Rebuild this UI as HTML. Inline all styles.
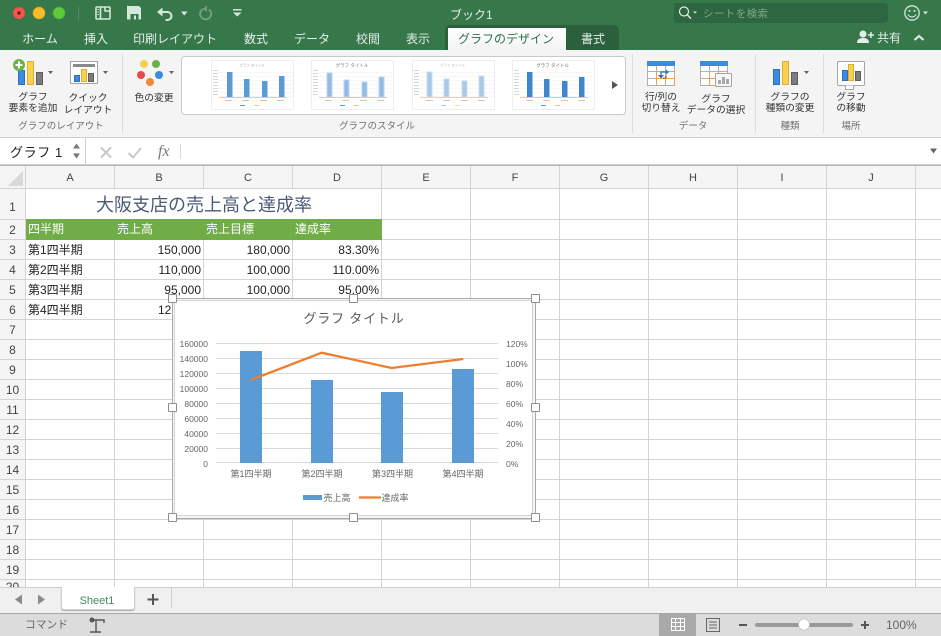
<!DOCTYPE html>
<html lang="ja"><head><meta charset="utf-8"><style>
html,body{margin:0;padding:0}
body{width:941px;height:636px;overflow:hidden;position:relative;background:#fff;font-family:"Liberation Sans","Noto Sans CJK JP",sans-serif;color:#222}
.a{position:absolute;white-space:nowrap}
.tab{position:absolute;top:31px;font-size:12px;line-height:17px;color:#e4efe7;transform:translateX(-50%);white-space:nowrap}
.rb{position:absolute;font-size:9.750px;line-height:10.500px;color:#333;text-align:center;transform:translateX(-50%);white-space:nowrap}
.gl{position:absolute;top:121px;font-size:9.500px;line-height:12px;color:#6f6f6f;transform:translateX(-50%);white-space:nowrap}
.sep{position:absolute;top:54px;height:79px;width:1px;background:#dcdcdc}
.ch{position:absolute;top:171px;font-size:11px;line-height:15px;color:#444;transform:translateX(-50%)}
.rh{position:absolute;left:0;width:25px;text-align:center;font-size:12px;line-height:14px;color:#444}
.c{position:absolute;font-size:12px;line-height:15px;color:#222;white-space:nowrap}
.r{text-align:right}
.w{color:#fff}
.h{position:absolute;width:7px;height:7px;background:#fff;border:1px solid #8f8f8f;border-radius:1px}
</style></head><body>

<!-- title bar -->
<div class="a" style="left:0;top:0;width:941px;height:50px;background:#37784b"></div>
<svg class="a" style="left:0;top:0" width="260" height="28" viewBox="0 0 260 28">
<circle cx="19" cy="13" r="6" fill="#ee5a50" stroke="#c9433b" stroke-width=".6"/><circle cx="19" cy="13" r="1.800" fill="#7d1a14"/>
<circle cx="39" cy="13" r="6" fill="#f8bb2e" stroke="#d79c1d" stroke-width=".6"/>
<circle cx="59" cy="13" r="6" fill="#5fc93e" stroke="#47a82c" stroke-width=".6"/>
<line x1="78.500" y1="6" x2="78.500" y2="21" stroke="#4e8a61"/>
<g fill="none" stroke="#d6e7db" stroke-width="1.600">
<rect x="96" y="7" width="14" height="12" rx="1"/><path d="M100.500 7v12"/><path d="M105 7v4h5"/>
</g>
<path d="M97.500 9.500h1.500M97.500 12h1.500M97.500 14.500h1.500" stroke="#d6e7db"/>
<path d="M128 6h11l2 2v11.500h-13.500a.5.5 0 0 1-.5-.5v-12.500a.5.5 0 0 1 1-.5z" fill="#d6e7db"/>
<rect x="130.500" y="14" width="8" height="5.500" fill="#37784b"/><rect x="134" y="15.500" width="2" height="4" fill="#d6e7db"/>
<path d="M160 12h7.500a4 4 0 0 1 0 8h-2" fill="none" stroke="#d6e7db" stroke-width="2"/><path d="M157 12l5.500-4.500v9z" fill="#d6e7db"/>
<path d="M181 11.500h6.500l-3.250 4z" fill="#d6e7db"/>
<path d="M203 9a5.500 5.500 0 1 0 6 .5" fill="none" stroke="#6f9f7e" stroke-width="2"/><path d="M207 5.500l-4.500 3.500 4.500 3z" fill="#6f9f7e"/>
<rect x="233" y="9" width="8.500" height="1.500" fill="#d6e7db"/><path d="M233 12.500h8.500l-4.250 4z" fill="#d6e7db"/>
</svg>
<div class="a" style="left:450px;top:7px;font-size:12px;line-height:16px;color:#e4efe7">ブック1</div>
<div class="a" style="left:674px;top:3px;width:214px;height:20px;background:#2d6640;border-radius:3px"></div>
<svg class="a" style="left:675px;top:3px" width="24" height="20"><circle cx="9" cy="8.500" r="4.500" fill="none" stroke="#e4efe7" stroke-width="1.200"/><path d="M12.200 11.800l3.800 3.800" stroke="#e4efe7" stroke-width="1.400"/><path d="M18 8.500h4l-2 2z" fill="#e4efe7"/></svg>
<div class="a" style="left:703px;top:7px;font-size:10.500px;line-height:15px;color:#7fa98c;letter-spacing:.4px">シートを検索</div>
<svg class="a" style="left:902px;top:4px" width="30" height="20"><circle cx="10" cy="9" r="7.200" fill="none" stroke="#d6e7db" stroke-width="1.300"/><circle cx="7.500" cy="7" r="1" fill="#d6e7db"/><circle cx="12.500" cy="7" r="1" fill="#d6e7db"/><path d="M6 10.500a4.500 4.500 0 0 0 8 0" fill="none" stroke="#d6e7db" stroke-width="1.100"/><path d="M21 7.500h5l-2.500 3z" fill="#d6e7db"/></svg>

<!-- tabs -->
<div class="tab" style="left:40px">ホーム</div>
<div class="tab" style="left:96px">挿入</div>
<div class="tab" style="left:175px">印刷レイアウト</div>
<div class="tab" style="left:256px">数式</div>
<div class="tab" style="left:312px">データ</div>
<div class="tab" style="left:368px">校閲</div>
<div class="tab" style="left:418px">表示</div>
<div class="a" style="left:445px;top:25px;width:174px;height:25px;background:#2c5f3c;border-radius:5px 5px 0 0"></div>
<div class="a" style="left:448px;top:28px;width:118px;height:22px;background:linear-gradient(#fff,#f3f3f3)"></div>
<div class="tab" style="left:506px;color:#2f7248">グラフのデザイン</div>
<div class="tab" style="left:593px">書式</div>
<svg class="a" style="left:854px;top:29px" width="22" height="16"><circle cx="9" cy="5" r="3.500" fill="#e4efe7"/><path d="M3 14c0-4 3-5 6-5s6 1 6 5z" fill="#e4efe7"/><path d="M17 3v6M14 6h6" stroke="#e4efe7" stroke-width="1.500"/></svg>
<div class="a" style="left:877px;top:30px;font-size:12px;line-height:16px;color:#e4efe7">共有</div>
<svg class="a" style="left:912px;top:33px" width="14" height="10"><path d="M2.500 7l4.500-4 4.500 4" fill="none" stroke="#e4efe7" stroke-width="2"/></svg>

<!-- ribbon -->
<div class="a" style="left:0;top:50px;width:941px;height:87px;background:#f4f4f4"></div>
<div class="a" style="left:0;top:137px;width:941px;height:1px;background:#cfcfcf"></div>
<svg class="a" style="left:0;top:52px" width="180" height="50" viewBox="0 52 180 50">
<rect x="18.500" y="70.500" width="6" height="14" fill="#3d8ae0" stroke="#2f6fb8"/><rect x="27.500" y="61.500" width="6" height="23" fill="#fbd04f" stroke="#dcaf35"/><rect x="36.500" y="72.500" width="6" height="12" fill="#7c7c7c" stroke="#5d5d5d"/>
<circle cx="19" cy="65" r="6" fill="#6cb24a"/><path d="M19 61.500v7M15.500 65h7" stroke="#fff" stroke-width="2"/>
<path d="M48 71h5l-2.500 3z" fill="#606060"/>
<rect x="70.500" y="61.500" width="27" height="22" fill="#fff" stroke="#a5a5a5"/><rect x="73" y="64" width="22" height="3" fill="#8a8a8a"/>
<rect x="74.500" y="75.500" width="5" height="6" fill="#3d8ae0" stroke="#2f6fb8"/><rect x="81.500" y="69.500" width="5" height="12" fill="#fbd04f" stroke="#dcaf35"/><rect x="88.500" y="73.500" width="5" height="8" fill="#7c7c7c" stroke="#5d5d5d"/>
<path d="M103 71h5l-2.500 3z" fill="#606060"/>
<circle cx="144" cy="64" r="4" fill="#f6cf4d"/><circle cx="156" cy="64" r="4" fill="#6cb24a"/><circle cx="141" cy="75" r="4" fill="#e34a4a"/><circle cx="159" cy="75" r="4" fill="#3d8ae0"/><circle cx="150" cy="82" r="4" fill="#f0883a"/>
<path d="M169 71h5l-2.500 3z" fill="#606060"/>
</svg>
<div class="rb" style="left:33px;top:93px">グラフ<br>要素を追加</div>
<div class="rb" style="left:88px;top:93px;line-height:11.500px">クイック<br>レイアウト</div>
<div class="rb" style="left:154px;top:94px">色の変更</div>
<div class="gl" style="left:61px">グラフのレイアウト</div>
<div class="sep" style="left:122px"></div>

<div class="a" style="left:181px;top:56px;width:443px;height:57px;background:#fff;border:1px solid #c9c9c9;border-radius:4px"></div>
<svg class="a" style="left:205px;top:58px" width="425" height="54" viewBox="205 58 425 54">
<defs>
<g id="gr"><path d="M8 12.500h74M8 16.500h74M8 20.500h74M8 24.500h74M8 28.500h74M8 32.500h74M8 36.500h74" stroke="#f0f0f0" stroke-width=".6"/>
<path d="M2 10.500h5M2 13.500h5M2 16.500h5M2 19.500h5M2 22.500h5M2 25.500h5M2 28.500h5M2 31.500h5M2 34.500h5" stroke="#c8c8c8" stroke-width=".7"/>
<path d="M14 40.500h7M31 40.500h7M49 40.500h7M66 40.500h7" stroke="#c8c8c8" stroke-width=".9"/></g>
</defs>
<g transform="translate(211,60)"><rect x=".5" y=".5" width="82" height="49" fill="#fff" stroke="#eee"/><use href="#gr"/><g fill="#5b9bd5"><rect x="16" y="12" width="5.500" height="25"/><rect x="33" y="19" width="5.500" height="18"/><rect x="51" y="21" width="5.500" height="16"/><rect x="68" y="16" width="5.500" height="21"/></g><path d="M8 37.500h68" stroke="#eec7a8"/><rect x="29" y="45" width="5" height="1" fill="#5b9bd5"/><rect x="43" y="45" width="5" height="1" fill="#f0c090"/></g>
<g transform="translate(311,60)"><rect x=".5" y=".5" width="82" height="49" fill="#fff" stroke="#eee"/><use href="#gr"/><g fill="#92bce3" stroke="#bcd6ee"><rect x="16" y="13" width="5" height="24"/><rect x="33" y="20" width="5" height="17"/><rect x="51" y="22" width="5" height="15"/><rect x="68" y="17" width="5" height="20"/></g><path d="M8 37.500h68" stroke="#eec7a8"/><rect x="29" y="45" width="5" height="1" fill="#5b9bd5"/><rect x="43" y="45" width="5" height="1" fill="#f0c090"/></g>
<g transform="translate(412,60)"><rect x=".5" y=".5" width="82" height="49" fill="#fff" stroke="#eee"/><use href="#gr"/><g fill="#a9c9e9" stroke="#c8dcf0"><rect x="15" y="12" width="5" height="25"/><rect x="32" y="19" width="5" height="18"/><rect x="50" y="21" width="5" height="16"/><rect x="67" y="16" width="5" height="21"/></g><path d="M8 37.500h68" stroke="#eecfb8"/><rect x="29" y="45" width="5" height="1" fill="#a9c9e9"/><rect x="43" y="45" width="5" height="1" fill="#f3d9a8"/></g>
<g transform="translate(512,60)"><rect x=".5" y=".5" width="82" height="49" fill="#fff" stroke="#eee"/><use href="#gr"/><g fill="#3f86cd"><rect x="15" y="12" width="5.500" height="25"/><rect x="32" y="19" width="5.500" height="18"/><rect x="50" y="21" width="5.500" height="16"/><rect x="67" y="17" width="5.500" height="20"/></g><path d="M8 37.500h68" stroke="#eec7a8"/><rect x="29" y="45" width="5" height="1" fill="#5b9bd5"/><rect x="43" y="45" width="5" height="1" fill="#f0c090"/></g>
<text x="252" y="66.500" font-size="3.500" fill="#aaa" text-anchor="middle">グラフ タイトル</text>
<text x="352" y="67" font-size="4.500" fill="#777" text-anchor="middle">グラフ タイトル</text>
<text x="452.700" y="66.500" font-size="3.500" fill="#bbb" text-anchor="middle">グラフ タイトル</text>
<text x="552.700" y="67" font-size="4.500" fill="#666" text-anchor="middle">グラフ タイトル</text>
<path d="M612 81v8l6-4z" fill="#555"/>
</svg>
<div class="gl" style="left:377px">グラフのスタイル</div>
<div class="sep" style="left:632px"></div>

<svg class="a" style="left:635px;top:52px" width="240" height="45" viewBox="635 52 240 45">
<g fill="#fff" stroke="#b0b0b0"><rect x="647.500" y="61.500" width="27" height="24"/><path d="M647 71.500h27M647 78.500h27M656.500 62v23M665.500 62v23" fill="none"/></g>
<rect x="647" y="61" width="28" height="5" fill="#3d8ae0"/><path d="M656.500 71.500h18v14h-18z M656.500 78.500h18 M665.500 72v13" fill="none" stroke="#f0a050"/>
<path d="M661 77v-5h6" fill="none" stroke="#2a6fc0" stroke-width="1.300"/><path d="M666 69.500l3 2.500-3 2.500z" fill="#2a6fc0"/><path d="M658 75l3 3.500 3-3.500z" fill="#2a6fc0"/><path d="M666 75v3h-3" fill="none" stroke="#2a6fc0"/>
<g fill="#fff" stroke="#b0b0b0"><rect x="700.500" y="61.500" width="27" height="24"/><path d="M700 71.500h27M700 78.500h27M709.500 62v23M718.500 62v23" fill="none"/></g>
<rect x="700" y="61" width="28" height="5" fill="#3d8ae0"/><path d="M709.500 71.500h18v14h-18z M709.500 78.500h18" fill="none" stroke="#f0a050"/>
<rect x="715.500" y="73.500" width="16" height="13" fill="#f7f7f7" stroke="#a5a5a5" rx="1"/><rect x="718" y="80" width="3" height="4" fill="#a9a9a9"/><rect x="722" y="77" width="3" height="7" fill="#a9a9a9"/><rect x="726" y="79" width="3" height="5" fill="#a9a9a9"/>
<rect x="773.500" y="69.500" width="6" height="15" fill="#3d8ae0" stroke="#2f6fb8"/><rect x="782.500" y="61.500" width="6" height="23" fill="#fbd04f" stroke="#dcaf35"/><rect x="791.500" y="72.500" width="6" height="12" fill="#7c7c7c" stroke="#5d5d5d"/>
<path d="M804 71h5l-2.500 3z" fill="#606060"/>
<rect x="837.500" y="61.500" width="27" height="24" fill="#fff" stroke="#a5a5a5" rx="1"/><path d="M845.500 85.500v4h8v-4" fill="#fff" stroke="#a5a5a5"/>
<rect x="842.500" y="70.500" width="5" height="10" fill="#3d8ae0" stroke="#2f6fb8"/><rect x="848.500" y="64.500" width="5" height="16" fill="#fbd04f" stroke="#dcaf35"/><rect x="855.500" y="71.500" width="5" height="9" fill="#7c7c7c" stroke="#5d5d5d"/>
</svg>
<div class="rb" style="left:661px;top:93px">行/列の<br>切り替え</div>
<div class="rb" style="left:716px;top:94px;line-height:11px">グラフ<br>データの選択</div>
<div class="gl" style="left:693px">データ</div>
<div class="sep" style="left:755px"></div>
<div class="rb" style="left:790px;top:93px">グラフの<br>種類の変更</div>
<div class="gl" style="left:790px">種類</div>
<div class="sep" style="left:823px"></div>
<div class="rb" style="left:851px;top:93px">グラフ<br>の移動</div>
<div class="gl" style="left:851px">場所</div>

<!-- formula bar -->
<div class="a" style="left:0;top:138px;width:941px;height:26px;background:#fff"></div>
<div class="a" style="left:0;top:164px;width:941px;height:2px;background:#cfcfcf"></div>
<div class="a" style="left:0;top:165px;width:941px;height:1px;background:#b5b5b5"></div>
<div class="a" style="left:85px;top:138px;width:1px;height:26px;background:#cfcfcf"></div>
<div class="a" style="left:10px;top:144px;font-size:13px;line-height:17px;color:#222;letter-spacing:.6px">グラフ 1</div>
<svg class="a" style="left:70px;top:141px" width="130" height="22"><path d="M3 7.500l3.500-5 3.500 5zM3 12.500l3.500 5 3.500-5z" fill="#777"/>
<path d="M31 6.500l10 10M41 6.500l-10 10" stroke="#c8c8c8" stroke-width="2"/><path d="M58.500 12l4.500 4.500 8-9.500" fill="none" stroke="#c8c8c8" stroke-width="2"/>
<line x1="110.500" y1="3" x2="110.500" y2="18" stroke="#d8d8d8"/></svg>
<div class="a" style="left:158px;top:143px;font:italic 16px/18px 'Liberation Serif',serif;color:#777">fx</div>
<svg class="a" style="left:929px;top:147px" width="10" height="8"><path d="M1 1.500h7l-3.500 5z" fill="#666"/></svg>

<!-- grid -->
<div class="a" style="left:0;top:166px;width:941px;height:22px;background:#f5f5f5"></div>
<div class="a" style="left:0;top:188px;width:25px;height:400px;background:#f5f5f5"></div>
<svg class="a" style="left:0;top:166px" width="941" height="422" viewBox="0 166 941 422">
<path d="M8 186l15-15v15z" fill="#d8d8d8"/>
<g stroke="#d4d4d4" fill="none">
<path d="M25.500 166v422M114.500 166v422M203.500 166v422M292.500 166v422M381.500 166v422M470.500 166v422M559.500 166v422M648.500 166v422M737.500 166v422M826.500 166v422M915.500 166v422"/>
<path d="M0 188.500h941M0 219.500h941M0 239.500h941M0 259.500h941M0 279.500h941M0 299.500h941M0 319.500h941M0 339.500h941M0 359.500h941M0 379.500h941M0 399.500h941M0 419.500h941M0 439.500h941M0 459.500h941M0 479.500h941M0 499.500h941M0 519.500h941M0 539.500h941M0 559.500h941M0 579.500h941"/>
</g>
<rect x="26" y="189" width="355" height="30" fill="#fff"/>
<rect x="26" y="219" width="356" height="21" fill="#70ad47"/>
</svg>
<div class="ch" style="left:70px">A</div><div class="ch" style="left:159px">B</div><div class="ch" style="left:248px">C</div><div class="ch" style="left:337px">D</div><div class="ch" style="left:426px">E</div><div class="ch" style="left:515px">F</div><div class="ch" style="left:604px">G</div><div class="ch" style="left:693px">H</div><div class="ch" style="left:782px">I</div><div class="ch" style="left:871px">J</div>
<div class="rh" style="top:200px">1</div><div class="rh" style="top:223px">2</div><div class="rh" style="top:243px">3</div><div class="rh" style="top:263px">4</div><div class="rh" style="top:283px">5</div><div class="rh" style="top:303px">6</div><div class="rh" style="top:323px">7</div><div class="rh" style="top:343px">8</div><div class="rh" style="top:363px">9</div><div class="rh" style="top:383px">10</div><div class="rh" style="top:403px">11</div><div class="rh" style="top:423px">12</div><div class="rh" style="top:443px">13</div><div class="rh" style="top:463px">14</div><div class="rh" style="top:483px">15</div><div class="rh" style="top:503px">16</div><div class="rh" style="top:523px">17</div><div class="rh" style="top:543px">18</div><div class="rh" style="top:563px">19</div><div class="rh" style="top:580px;height:8px;overflow:hidden">20</div>

<div class="c" style="left:26px;width:356px;top:194px;text-align:center;font-size:18px;line-height:22px;color:#4a5a75">大阪支店の売上高と達成率</div>
<div class="c w" style="left:28px;top:222px">四半期</div><div class="c w" style="left:117px;top:222px">売上高</div><div class="c w" style="left:206px;top:222px">売上目標</div><div class="c w" style="left:295px;top:222px">達成率</div>
<div class="c" style="left:28px;top:243px">第1四半期</div><div class="c r" style="left:114px;width:87px;top:243px">150,000</div><div class="c r" style="left:203px;width:87px;top:243px">180,000</div><div class="c r" style="left:292px;width:87px;top:243px">83.30%</div>
<div class="c" style="left:28px;top:263px">第2四半期</div><div class="c r" style="left:114px;width:87px;top:263px">110,000</div><div class="c r" style="left:203px;width:87px;top:263px">100,000</div><div class="c r" style="left:292px;width:87px;top:263px">110.00%</div>
<div class="c" style="left:28px;top:283px">第3四半期</div><div class="c r" style="left:114px;width:87px;top:283px">95,000</div><div class="c r" style="left:203px;width:87px;top:283px">100,000</div><div class="c r" style="left:292px;width:87px;top:283px">95.00%</div>
<div class="c" style="left:28px;top:303px">第4四半期</div><div class="c" style="left:158px;top:303px">125,000</div>

<!-- chart -->
<div class="a" style="left:172px;top:298px;width:362px;height:219px;background:#f6f6f6;border:1px solid #a9a9a9"></div>
<svg class="a" style="left:172px;top:298px" width="364" height="221" viewBox="172 298 364 221">
<rect x="174.500" y="300.500" width="358" height="215" rx="3" fill="#fff" stroke="#d4d4d4"/>
<g stroke="#d9d9d9"><path d="M216 343.500h282M216 358.500h282M216 373.500h282M216 388.500h282M216 403.500h282M216 418.500h282M216 433.500h282M216 448.500h282M216 462.500h282"/></g>
<g fill="#5b9bd5"><rect x="240" y="351" width="22" height="112"/><rect x="311" y="380" width="22" height="83"/><rect x="381" y="392" width="22" height="71"/><rect x="452" y="369" width="22" height="94"/></g>
<polyline points="250.700,380 321.700,352.700 391.700,368 463.300,359" fill="none" stroke="#ed7d31" stroke-width="2.300"/>
<rect x="303" y="495" width="19" height="5" fill="#5b9bd5"/><line x1="359" y1="497.500" x2="381" y2="497.500" stroke="#ed7d31" stroke-width="2.300"/>
<g font-size="8.500" fill="#666" text-anchor="end" font-family="Liberation Sans,sans-serif">
<text x="208" y="347">160000</text><text x="208" y="362">140000</text><text x="208" y="377">120000</text><text x="208" y="392">100000</text><text x="208" y="407">80000</text><text x="208" y="422">60000</text><text x="208" y="437">40000</text><text x="208" y="452">20000</text><text x="208" y="467">0</text>
</g>
<g font-size="8.500" fill="#666" font-family="Liberation Sans,sans-serif">
<text x="506" y="347">120%</text><text x="506" y="367">100%</text><text x="506" y="387">80%</text><text x="506" y="407">60%</text><text x="506" y="427">40%</text><text x="506" y="447">20%</text><text x="506" y="467">0%</text>
</g>
<g font-size="9" fill="#666" text-anchor="middle" font-family="Liberation Sans,Noto Sans CJK JP,sans-serif">
<text x="251" y="477">第1四半期</text><text x="322" y="477">第2四半期</text><text x="392.500" y="477">第3四半期</text><text x="463" y="477">第4四半期</text>
<text x="337" y="501">売上高</text><text x="395" y="501">達成率</text>
</g>
<text x="354" y="323" font-size="13" fill="#595959" text-anchor="middle" font-family="Liberation Sans,Noto Sans CJK JP,sans-serif" letter-spacing=".8">グラフ タイトル</text>
</svg>
<div class="h" style="left:168px;top:294px"></div><div class="h" style="left:349px;top:294px"></div><div class="h" style="left:531px;top:294px"></div>
<div class="h" style="left:168px;top:403px"></div><div class="h" style="left:531px;top:403px"></div>
<div class="h" style="left:168px;top:513px"></div><div class="h" style="left:349px;top:513px"></div><div class="h" style="left:531px;top:513px"></div>

<!-- sheet bar -->
<div class="a" style="left:0;top:587px;width:941px;height:26px;background:#f0f0f0;border-top:1px solid #d0d0d0;box-sizing:border-box"></div>
<div class="a" style="left:61px;top:587px;width:72px;height:22px;background:#fff;border:1px solid #d0d0d0;border-top:0;border-radius:0 0 3px 3px;box-shadow:0 1px 1px #aaa"></div>
<div class="a" style="left:61px;top:594px;width:72px;text-align:center;font-size:11px;line-height:15px;color:#3f8a5f">Sheet1</div>
<svg class="a" style="left:0;top:588px" width="175" height="24"><path d="M22 6.500v10l-7-5zM38 6.500v10l7-5z" fill="#8a8a8a"/><path d="M153 6v11M147.500 11.500h11" stroke="#555" stroke-width="2"/><line x1="171.500" y1="0" x2="171.500" y2="20" stroke="#d0d0d0"/></svg>

<!-- status bar -->
<div class="a" style="left:0;top:613px;width:941px;height:23px;background:#dcdcdc;border-top:1px solid #a8a8a8;box-sizing:border-box"></div>
<div class="a" style="left:25px;top:618px;font-size:10.750px;line-height:15px;color:#666">コマンド</div>
<svg class="a" style="left:86px;top:615px" width="20" height="20"><circle cx="6" cy="5" r="2.500" fill="#555"/><path d="M6 5h12v3M10 5v12M4 17h11" fill="none" stroke="#555" stroke-width="1.400"/></svg>
<div class="a" style="left:659px;top:614px;width:37px;height:22px;background:#a9a9a9"></div>
<svg class="a" style="left:660px;top:614px" width="230" height="22">
<path d="M11.500 4.500h13v12h-13z M11.500 8.500h13M11.500 12.500h13M15.500 4.500v12M20.500 4.500v12" fill="none" stroke="#fff"/>
<rect x="46.500" y="4.500" width="13" height="13" fill="none" stroke="#666"/><path d="M49 8h8M49 11h8M49 14h8" stroke="#666"/>
<path d="M79 11h8" stroke="#555" stroke-width="2"/>
<rect x="95" y="9" width="98" height="4" rx="2" fill="#9a9a9a"/>
<circle cx="144" cy="10.500" r="5.500" fill="#fff" stroke="#bbb" stroke-width=".6"/>
<path d="M201 11h8M205 7v8" stroke="#555" stroke-width="2"/>
</svg>
<div class="a" style="left:886px;top:617px;font-size:12px;line-height:16px;color:#666">100%</div>
</body></html>
